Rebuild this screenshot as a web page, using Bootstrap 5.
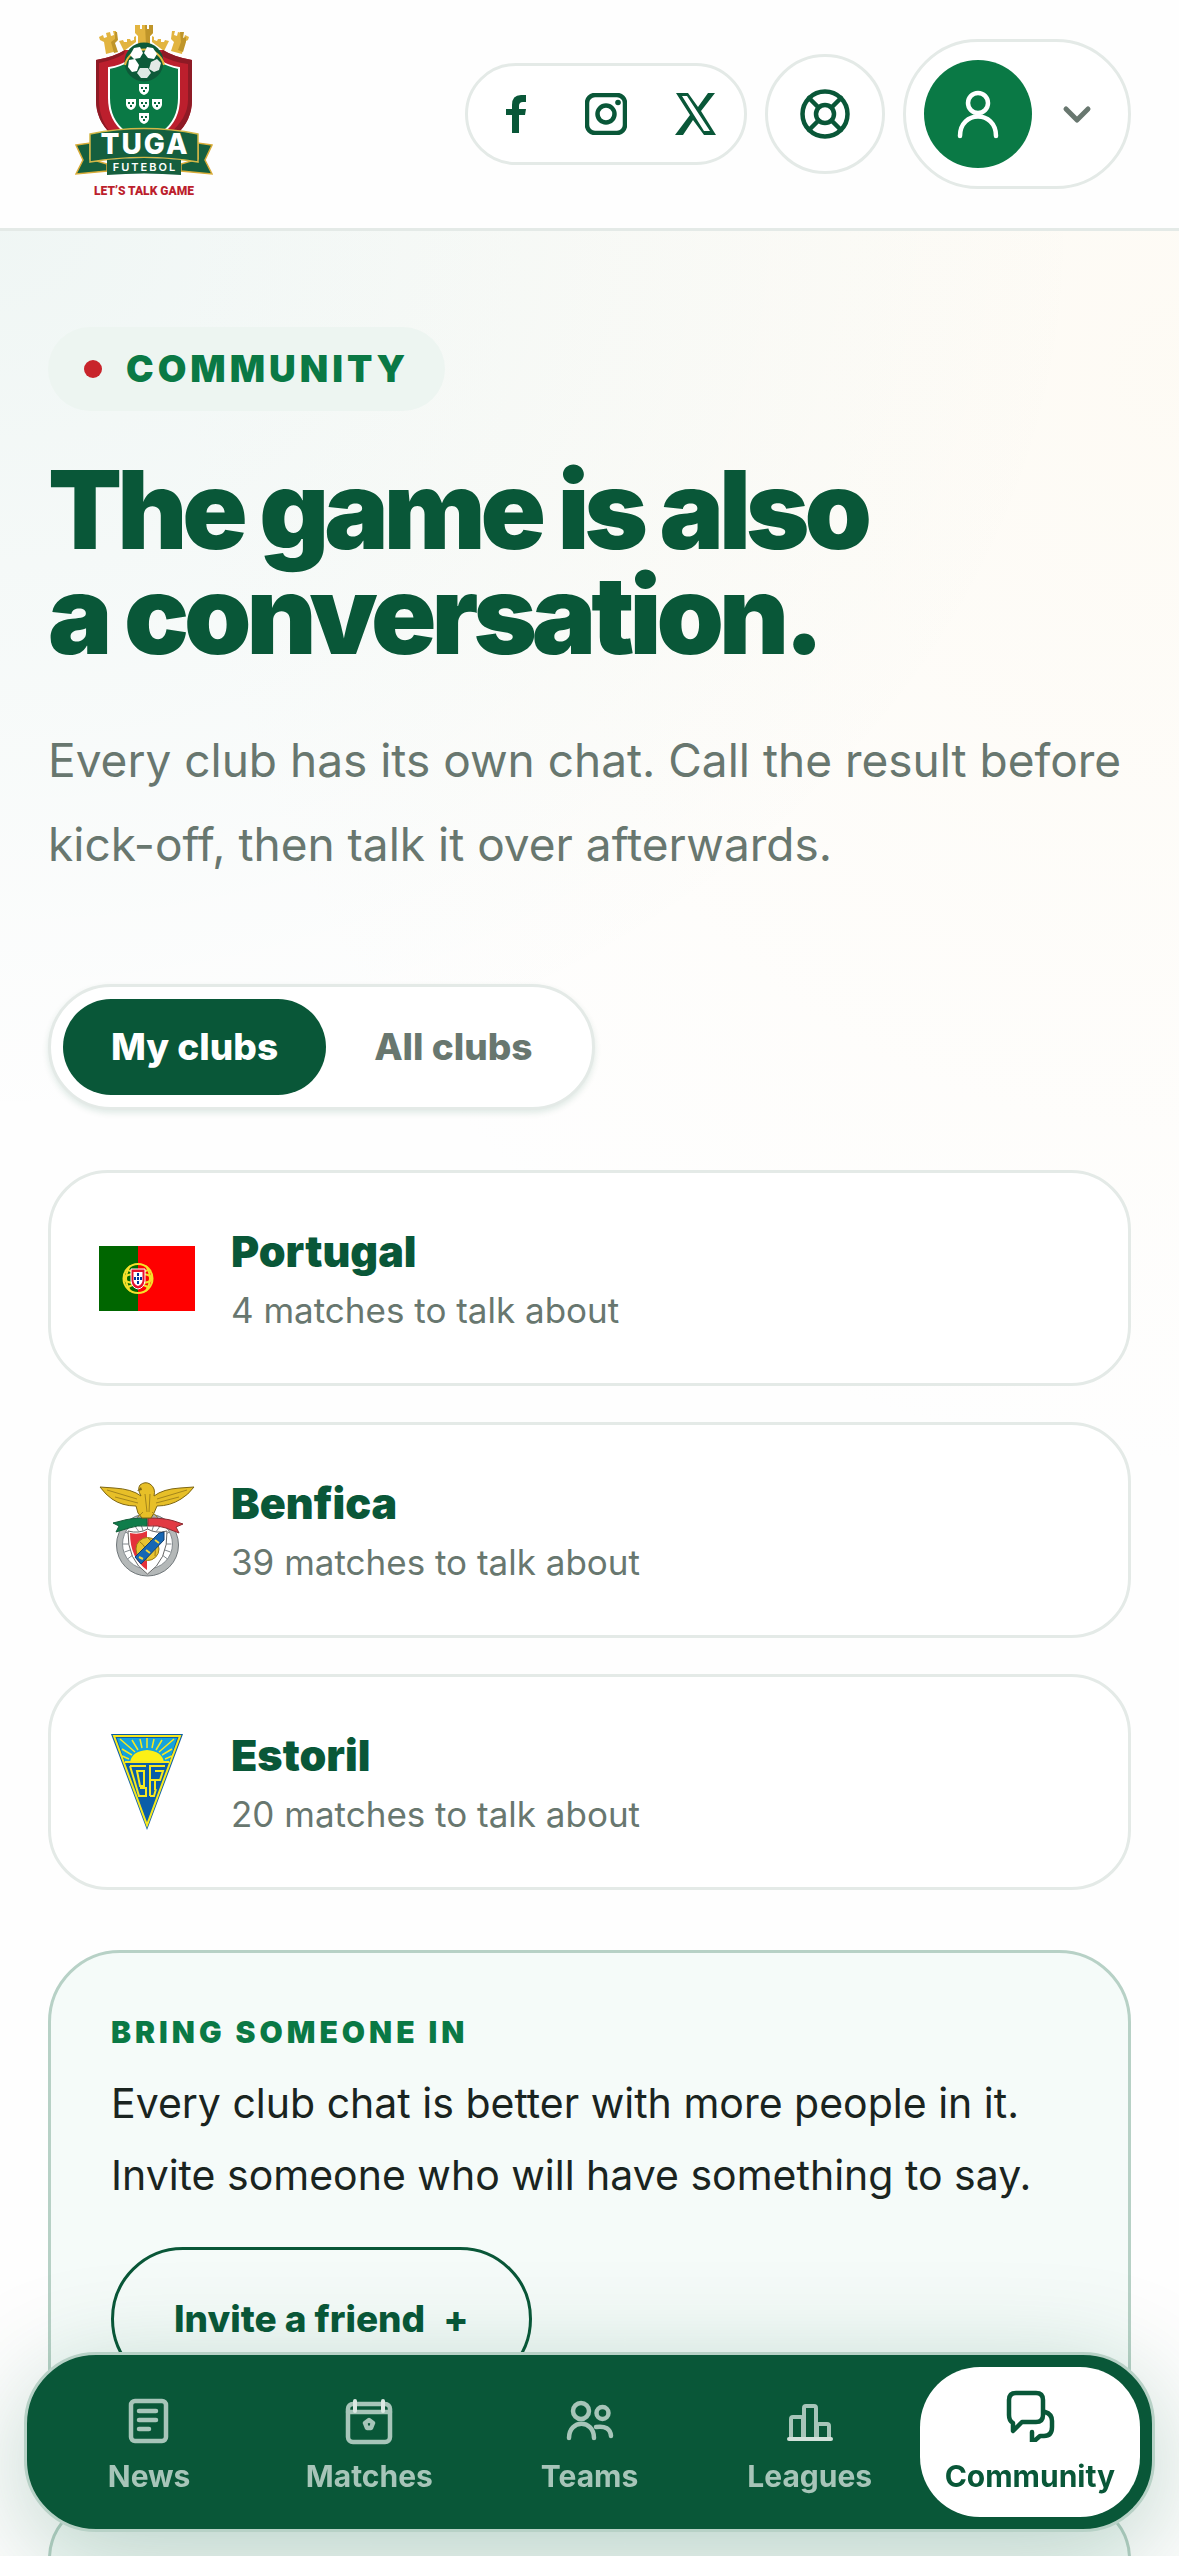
<!DOCTYPE html>
<html lang="en">
<head>
<meta charset="utf-8">
<meta name="viewport" content="width=device-width, initial-scale=1">
<title>Tuga Futebol – Community</title>
<link href="https://cdn.jsdelivr.net/npm/bootstrap@5.3.0/dist/css/bootstrap.min.css" rel="stylesheet">
<style>
:root{--ink:#095738;--leaf:#0a7945;--muted:#68776f;--line:#e4eae7;--edge:#b7d1c6}
body{font-family:Inter,"Liberation Sans",sans-serif;color:#1a2420;background:#fefefe}
svg{display:block;flex:none}
.topbar{background:#fefefe;border-bottom:3px solid var(--line);height:231px;padding:0 48px 0 75px}
.tools{gap:18px}
.pill{border:3px solid var(--line);background:#fff;color:var(--ink)}
.social{height:102px;padding:0 3px}
.social a{width:90px;color:var(--ink)}
.help-btn{width:120px;height:120px}
.account{height:150px;padding:0 33px 0 18px;gap:27px}
.account-caret{color:var(--muted)}
.avatar{width:108px;height:108px;background:var(--leaf)}
.feed{padding:96px 48px 0;overflow:auto;scrollbar-width:none;
 background:radial-gradient(ellipse 1000px 1100px at 100% 6%,rgba(250,230,185,.14),rgba(250,230,185,0)),
 radial-gradient(ellipse 1100px 900px at 0 0,rgba(10,121,90,.06),rgba(10,121,90,0)),#fefefe}
.eyebrow{height:84px;padding:0 36px;gap:24px;background:#edf5f1;color:var(--leaf);font-size:37px;font-weight:900;letter-spacing:4px}
.dot{width:18px;height:18px;background:#c8242b}
.headline{margin:46px 0 0;font-size:108px;line-height:105px;font-weight:900;letter-spacing:-5px;color:var(--ink)}
.intro{margin:51px 0 0;font-size:46px;line-height:84px;color:var(--muted)}
.switch{margin-top:98px;padding:12px;box-shadow:0 3px 6px rgba(9,87,56,.12)}
.switch .nav-link{height:96px;padding:0 48px;border:0;background:none;font-size:37px;font-weight:800;color:var(--muted);border-radius:48px}
.switch .nav-link.active{background:var(--ink);color:#fff}
.clubs{margin-top:60px;gap:36px}
.club{height:216px;padding:0 48px;gap:36px;border:3px solid var(--line);border-radius:60px;background:#fff}
.club-name{font-size:43px;line-height:64px;font-weight:900;color:var(--ink)}
.club-meta{font-size:35px;line-height:54px;color:var(--muted)}
.panel{margin-top:60px;border:3px solid var(--edge);border-radius:72px;background:#f5fbf9;padding:54px 60px 60px}
.panel + .panel{margin-top:45px}
.panel-tag{font-size:30px;line-height:50px;font-weight:900;letter-spacing:4px;color:var(--leaf)}
.panel-text{margin:10px 0 36px;font-size:41px;line-height:72px}
.invite{height:144px;padding:0 60px;border:3px solid var(--ink);color:var(--ink);font-size:37px;font-weight:800;gap:18px}
.dock{left:24px;right:24px;bottom:24px;padding:12px;border:3px solid var(--edge);border-radius:72px;background:var(--ink);box-shadow:0 24px 108px rgba(9,87,56,.26)}
.dock a{height:150px;padding-top:27px;border-radius:60px;color:#a7c5b9;font-size:30px;line-height:36px;font-weight:700;gap:10px}
.dock a.active{background:#fff;color:var(--ink)}
.dock svg{width:54px;height:54px}
.dock .active svg{margin-top:-6px;margin-bottom:6px}
.line{fill:none;stroke:currentColor;stroke-linecap:round;stroke-linejoin:round}
</style>
<script src="https://cdn.jsdelivr.net/npm/bootstrap@5.3.0/dist/js/bootstrap.bundle.min.js"></script>
</head>
<body>
<div class="vh-100 d-flex flex-column overflow-hidden">
<header class="topbar d-flex align-items-center justify-content-between flex-shrink-0">
 <a href="#" aria-label="Tuga Futebol home">
 <svg width="138" height="188" viewBox="75 20 138 188">
  <g fill="#e2b43f">
   <path d="M99 37l4-2 1 3 3-1-1-4 4-1 1 4 3-1-1-4 3 0 1 8-3 3 3 9-11 3-2-12-4-2z"/>
   <path d="M189 37l-4-2-1 3-3-1 1-4-4-1-1 4-3-1 1-4-3 0-1 8 3 3-3 9 11 3 2-12 4-2z"/>
   <path d="M119 41l4-1 1 2 3 0 0-3 3 0 1 2 3-1v-3l2-1v6l-12 9-3-6z"/>
   <path d="M169 41l-4-1-1 2-3 0 0-3-3 0-1 2-3-1v-3l-2-1v6l12 9 3-6z"/>
   <path d="M135 25h5v4h2v-4h5v4h2v-4h4v8l-3 3v9h-12v-9l-3-3z"/>
  </g>
  <path d="M145 25h2v4h2v-4h4v8l-3 3v9h-4zM115 32h2l1 8-3 3 3 9-4 1-3-11 4-3zM180 32h4l-1 6 3-1 0 5-3 10-5-2 3-8z" fill="#bf952a"/>
  <path d="M96 60q18-3 29-10h38q11 7 29 10v40q0 20-15 34h-66q-15-14-15-34z" fill="#bc1f2d"/>
  <path d="M163 50q11 7 29 10v40q0 20-15 34h-8q19-16 19-34V64q-16-2-28-9z" fill="#8e1a25"/>
  <path d="M96 60q18-3 29-10l-1 4q-10 6-25 9v37q0 20 13 34h-1q-15-14-15-34z" fill="#8e1a25"/>
  <path d="M109 68q12-2 19-7h32q8 5 19 7v30q0 22-16 34h-38q-16-12-16-34z" fill="#0a7945" stroke="#fff" stroke-width="2"/>
  <circle cx="144" cy="62" r="19.500" fill="#0d5a39"/>
  <path d="M125 65a20 20 0 0 1 39 0" fill="none" stroke="#e8bb3e" stroke-width="2"/>
  <g fill="#fff">
   <path d="M134 48l6-1 3 6-3 5-6 1-4-4z"/><path d="M147 47l6 1 4 6-3 5-6-1-4-5z"/><path d="M129 60l6-1 4 6-2 6-5 1-4-5z"/><path d="M157 59l4 4-2 7-5 2-5-3 2-7z" fill="#e3e9e6"/><path d="M140 68h8l3 5-4 5h-6l-4-5z" fill="#dfe8e4"/>
   <path d="M139 84h10v6q-1 4-5 5-4-1-5-5zM139 99h10v6q-1 4-5 5-4-1-5-5zM126 99h10v6q-1 4-5 5-4-1-5-5zM152 99h10v6q-1 4-5 5-4-1-5-5zM139 113h10v6q-1 4-5 5-4-1-5-5z"/>
  </g>
  <g fill="#0a6840"><path d="M141 87h2v2h-2zM145 87h2v2h-2zM143 90h2v2h-2zM141 102h2v2h-2zM145 102h2v2h-2zM143 105h2v2h-2zM128 102h2v2h-2zM132 102h2v2h-2zM130 105h2v2h-2zM154 102h2v2h-2zM158 102h2v2h-2zM156 105h2v2h-2zM141 116h2v2h-2zM145 116h2v2h-2zM143 119h2v2h-2z"/></g>
  <path d="M76 145l14-2v16l17 5v7l-31 3 7-14zM212 145l-14-2v16l-17 5v7l31 3-7-14z" fill="#155f3e" stroke="#d9ac38" stroke-width="1.500"/>
  <path d="M90 134q54-11 108 0v28q-54-9-108 0z" fill="#155f3e" stroke="#d3b848" stroke-width="1.500"/>
  <path d="M107 160q37-4 74 0v15q-37-3-74 0z" fill="#155f3e"/>
  <text x="145" y="154" text-anchor="middle" font-family="Inter,sans-serif" font-weight="800" font-size="28" letter-spacing="2" fill="#fff">TUGA</text>
  <text x="145" y="171" text-anchor="middle" font-family="Inter,sans-serif" font-weight="600" font-size="11" letter-spacing="2" fill="#fff">FUTEBOL</text>
  <text x="144" y="195" text-anchor="middle" font-family="Roboto,sans-serif" font-weight="900" font-size="12" fill="#bc1f2d">LET’S TALK GAME</text>
 </svg></a>
 <div class="tools d-flex align-items-center">
  <div class="pill social rounded-pill d-flex align-items-stretch">
   <a href="#" aria-label="Facebook" class="d-flex align-items-center justify-content-center"><svg width="42" height="42" viewBox="0 0 42 42"><path d="M17 40V22h-6v-6h6v-4q0-10 9-10h5v7h-3q-4 0-4 4v3h7l-1 6h-6v18z" fill="currentColor"/></svg></a>
   <a href="#" aria-label="Instagram" class="d-flex align-items-center justify-content-center"><svg width="42" height="42" viewBox="0 0 42 42"><rect x="2" y="2" width="38" height="38" rx="8" class="line" stroke-width="4.500"/><circle cx="21" cy="21" r="8.500" class="line" stroke-width="4.500"/><circle cx="33" cy="9.500" r="2.800" fill="currentColor"/></svg></a>
   <a href="#" aria-label="X" class="d-flex align-items-center justify-content-center"><svg width="42" height="42" viewBox="0 0 42 42"><path d="M1 0h12l10 14L33 0h7L26 18l15 24H29L18 27 8 42H0l15-20zM7 3l22 35h6L12 3z" fill="currentColor" fill-rule="evenodd"/></svg></a>
  </div>
  <button type="button" aria-label="Help" class="pill help-btn rounded-circle p-0 d-flex align-items-center justify-content-center"><svg width="54" height="54" viewBox="0 0 54 54" class="line" stroke-width="4.500"><circle cx="27" cy="27" r="22.500"/><circle cx="27" cy="27" r="9"/><path d="M11 11l9.500 9.500M43 11l-9.500 9.500M11 43l9.500-9.500M43 43l-9.500-9.500"/></svg></button>
  <button type="button" aria-label="Account menu" class="pill account rounded-pill d-flex align-items-center">
   <span class="avatar rounded-circle d-flex align-items-center justify-content-center text-white"><svg width="54" height="54" viewBox="0 0 54 54" class="line" stroke-width="4.500"><circle cx="27" cy="16" r="10"/><path d="M9 49C9 23 45 23 45 49"/></svg></span>
   <svg width="36" height="36" viewBox="0 0 36 36" class="line account-caret" stroke-width="5"><path d="M7 13l11 11 11-11"/></svg>
  </button>
 </div>
</header>

<main class="feed flex-grow-1">
 <div class="eyebrow rounded-pill d-inline-flex align-items-center align-top"><span class="dot rounded-circle"></span>COMMUNITY</div>
 <h1 class="headline">The game is also<br>a conversation.</h1>
 <p class="intro">Every club has its own chat. Call the result before kick-off, then talk it over afterwards.</p>
 <div class="nav pill switch rounded-pill d-inline-flex align-top" role="tablist">
  <button type="button" role="tab" aria-selected="true" class="nav-link active">My clubs</button>
  <button type="button" role="tab" aria-selected="false" class="nav-link">All clubs</button>
 </div>

 <div class="clubs d-flex flex-column">
  <a href="#" class="club d-flex align-items-center text-decoration-none">
   <svg width="96" height="96" viewBox="0 0 96 96"><path d="M0 16h39v65H0z" fill="#060"/><path d="M39 16h57v65H39z" fill="red"/>
    <g fill="none" stroke="#f5e02a" stroke-width="2"><circle cx="39" cy="48.500" r="14.500"/><ellipse cx="39" cy="48.500" rx="14" ry="5"/><path d="M28 39q11 8 22 0M28 58q11-8 22 0M31 36q-8 12 0 25M47 36q8 12 0 25"/></g>
    <path d="M32 39h14v12q-1 7-7 8-6-1-7-8z" fill="#e8112d" stroke="#fff"/><path d="M34.500 42h9v9q-1 4-4.500 5-3.500-1-4.500-5z" fill="#fff"/><path d="M38 43h2v3h-2zM38 47h2v3h-2zM38 51h2v3h-2zM35 47h2v3h-2zM41 47h2v3h-2z" fill="#039"/></svg>
   <div><div class="club-name">Portugal</div><div class="club-meta">4 matches to talk about</div></div>
  </a>
  <a href="#" class="club d-flex align-items-center text-decoration-none">
   <svg width="96" height="96" viewBox="0 0 96 96">
    <circle cx="48.500" cy="63" r="31" fill="#b4b8b8" stroke="#70777a"/>
    <circle cx="48.500" cy="62" r="25" fill="#fff" stroke="#858c90"/>
    <g stroke="#81888c"><path d="M48.500 62V38M48.500 62l-8-24M48.500 62l8-24M48.500 62l-14-20M48.500 62l14-20M48.500 62l-22-12M48.500 62l22-12M48.500 62H24M48.500 62h24M48.500 62l-23 8M48.500 62l23 8M48.500 62l-20 15M48.500 62l20 15"/></g>
    <path d="M29 49q11 3 19.500-2 8.500 5 19.500 2 1 29-19.500 43Q28 78 29 49z" fill="#fff" stroke="#666"/>
    <path d="M31 51q10 2 17-2v39Q31 76 31 51z" fill="#e4323b"/>
    <circle cx="48.500" cy="67" r="11.500" fill="#e8c431" stroke="#9a7a14"/><path d="M41 60q8 5 6 18M49 56q9 6 7 18" fill="none" stroke="#9a7a14"/>
    <path d="M36 75l24-24 5-1v8L42 82z" fill="#1667b4" stroke="#123f70"/>
    <path d="M40 75l4 2M47 68l4 3M56 58l4 3" stroke="#f2d43a" stroke-width="2"/>
    <ellipse cx="48.500" cy="36" rx="10" ry="5" fill="#a8adad" stroke="#70777a"/>
    <path d="M48 36q-17 0-26 3l-8 2 6 3-3 6 13-4q8-3 18-2z" fill="#0f7d4b" stroke="#125c38"/>
    <path d="M49 36q17 0 26 3l9 3-7 3 3 6-13-5q-8-3-18-2z" fill="#e23a43" stroke="#8c2a30"/>
    <path d="M1 5l14 1q18 1 27 8-4-7-1-11 5-4 10-1 6 4 4 12 9-7 26-8l14-1q-6 8-13 12-11 7-24 7l-3 7-3 5h-9l-4-5-2-7q-14 0-24-7Q7 13 1 5z" fill="#e7bf28" stroke="#7e6612"/>
    <path d="M8 8l30 9M16 15l23 6M88 8l-30 9M80 15l-23 6M46 12l2 18M51 12l-1 18M44 30l-5 5M53 30l5 5" stroke="#a5861c" stroke-width="1"/>
    <path d="M42 5l-4 4 5-1z" fill="#7e6612"/>
   </svg>
   <div><div class="club-name">Benfica</div><div class="club-meta">39 matches to talk about</div></div>
  </a>
  <a href="#" class="club d-flex align-items-center text-decoration-none">
   <svg width="96" height="96" viewBox="0 0 96 96">
    <path d="M12 0h72L48 96z" fill="#0b5ea8"/><path d="M15 2h66L48 91z" fill="#0b5ea8" stroke="#f7e81e" stroke-width="2"/>
    <path d="M18 4h60l-8 24H26z" fill="#14a3dc"/>
    <path d="M31 28q2-11 17-12 15 1 17 12z" fill="#fcf016"/>
    <path d="M48 14V4M43 14l-2-9M53 14l2-9M39 16l-6-10M57 16l6-10M36 18L21 5M60 18L75 5M33 21l-10-6M63 21l10-6M30 25l-7-3M66 25l7-3" stroke="#f7e81e" stroke-width="1.500"/>
    <path d="M26 28h44M31 32h16M31 32l9 30h7v-8h-6M38 37h7v15h-4zM51 62V32h15M51 46h5M56 37h8l-3 9h-5v10M51 62h4l2-7" fill="none" stroke="#f7e81e" stroke-width="2"/>
   </svg>
   <div><div class="club-name">Estoril</div><div class="club-meta">20 matches to talk about</div></div>
  </a>
 </div>

 <section class="panel">
  <div class="panel-tag">BRING SOMEONE IN</div>
  <p class="panel-text">Every club chat is better with more people in it.<br>Invite someone who will have something to say.</p>
  <button type="button" class="invite btn rounded-pill d-inline-flex align-items-center"><span>Invite a friend</span><span>+</span></button>
 </section>
 <section class="panel"></section>
</main>

<nav class="dock position-fixed d-flex" aria-label="Main">
 <a href="#" class="col d-flex flex-column align-items-center text-decoration-none"><svg viewBox="0 0 54 54" class="line" stroke-width="4.500"><rect x="9" y="7" width="35" height="40" rx="4"/><path d="M17 17h17M17 26h17M17 35h10"/></svg>News</a>
 <a href="#" class="col d-flex flex-column align-items-center text-decoration-none"><svg viewBox="0 0 54 54" class="line" stroke-width="4.500"><rect x="6" y="10" width="42" height="38" rx="5"/><path d="M6 18h42"/><path d="M13 7v10M41 7v10" stroke="#dce9e3" stroke-width="4"/><path d="M27 26l4 3-2 5h-4l-2-5z"/></svg>Matches</a>
 <a href="#" class="col d-flex flex-column align-items-center text-decoration-none"><svg viewBox="0 0 54 54" class="line" stroke-width="4.500"><circle cx="18" cy="17" r="8"/><path d="M6 44C6 25 31 25 31 44"/><circle cx="39.500" cy="19" r="6"/><path d="M33 33Q47 31 48 42"/></svg>Teams</a>
 <a href="#" class="col d-flex flex-column align-items-center text-decoration-none"><svg viewBox="0 0 54 54" class="line" stroke-width="4"><rect x="8" y="23" width="12" height="22" rx="2"/><rect x="21" y="12" width="12" height="33" rx="2"/><rect x="34" y="30" width="12" height="15" rx="2"/><path d="M6 45h42" stroke="#d3e2db"/></svg>Leagues</a>
 <a href="#" class="col active d-flex flex-column align-items-center text-decoration-none" aria-current="page"><svg viewBox="0 0 54 54" class="line" stroke-width="4.500"><path d="M13 5h20q7 0 7 7v15q0 7-7 7H19l-9 9v-8q-4-2-4-8V12q0-7 7-7z"/><path d="M42 24q7 2 7 9v6q0 9-8 9h-4l-8 7V44"/></svg>Community</a>
</nav>
</div>
</body>
</html>
